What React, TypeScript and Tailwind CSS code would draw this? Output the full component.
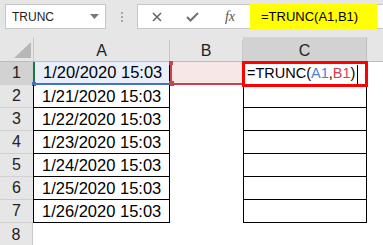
import React from "react";

const rows = [
  "1/20/2020 15:03",
  "1/21/2020 15:03",
  "1/22/2020 15:03",
  "1/23/2020 15:03",
  "1/24/2020 15:03",
  "1/25/2020 15:03",
  "1/26/2020 15:03",
];

const font = { fontFamily: '"Liberation Sans", Arial, sans-serif' };

function TopBar() {
  return (
    <div className="h-[37px] bg-[#e6e6e6] flex items-start pt-[4px]">
      {/* name box */}
      <div className="ml-[5px] w-[101px] h-[25px] bg-white border border-[#c6c6c6] flex items-center pl-[6px] pr-[6px]">
        <span className="text-[12px] text-[#222] flex-1">TRUNC</span>
        <svg width="9" height="5" viewBox="0 0 9 5">
          <path d="M0 0 L9 0 L4.5 5 Z" fill="#777" />
        </svg>
      </div>
      {/* dots */}
      <div className="w-[31px] h-[25px] flex flex-col items-center justify-center gap-[2px]">
        <div className="w-[2px] h-[2px] bg-[#a6a6a6]" />
        <div className="w-[2px] h-[2px] bg-[#a6a6a6]" />
        <div className="w-[2px] h-[2px] bg-[#a6a6a6]" />
      </div>
      {/* formula bar */}
      <div className="flex-1 h-[25px] bg-white border border-[#c6c6c6] border-r-0 flex items-center">
        <div className="w-[37px] flex justify-center">
          <svg width="10" height="10" viewBox="0 0 10 10">
            <path d="M1 1 L9 9 M9 1 L1 9" stroke="#666" strokeWidth="1.6" />
          </svg>
        </div>
        <div className="w-[35px] flex justify-center">
          <svg width="13" height="10" viewBox="0 0 13 10">
            <path d="M1 5 L4.5 8.5 L12 1" stroke="#707070" strokeWidth="2" fill="none" />
          </svg>
        </div>
        <div className="w-[40px] flex justify-center">
          <span
            className="italic text-[14px] text-[#555]"
            style={{ fontFamily: '"Liberation Serif", "Times New Roman", serif' }}
          >
            fx
          </span>
        </div>
        <div className="w-[127px] h-[25px] -my-px bg-[#ffff00] flex items-center pl-[11px] text-[13px] text-black">
          =TRUNC(A1,B1)
        </div>
      </div>
    </div>
  );
}

function HeaderRow() {
  return (
    <div className="h-[25px] bg-[#e6e6e6] flex border-b border-[#bdbdbd]">
      <div className="w-[34px] h-full flex items-end justify-end pr-[2px] pb-[3px] border-r border-[#c8c8c8]">
        <svg width="17" height="16" viewBox="0 0 17 16">
          <path d="M17 0 L17 16 L0 16 Z" fill="#b7b7b7" />
        </svg>
      </div>
      <div className="w-[136px] flex items-center justify-center border-r border-[#c8c8c8] text-[16px] text-[#222] mt-[3px]">
        A
      </div>
      <div className="w-[73px] flex items-center justify-center border-r border-[#c8c8c8] text-[16px] text-[#222] mt-[3px]">
        B
      </div>
      <div className="w-[124px] flex items-center justify-center bg-[#d2d2d2] border-r border-[#c0c0c0] text-[16px] text-[#222] pt-[3px]">
        C
      </div>
      <div className="flex-1" />
    </div>
  );
}

function Row({ n, value }: { n: number; value: string }) {
  const first = n === 1;
  return (
    <div className="h-[23px] flex">
      <div
        className={`w-[33px] flex items-center justify-center text-[16px] border-b border-[#d0d0d0] ${
          first ? "bg-[#d2d2d2] text-[#222]" : "bg-[#e6e6e6] text-[#222]"
        }`}
      >
        {n}
      </div>
      <div
        className={`relative w-[137px] flex items-center pl-[8px] text-[16.5px] text-black ${
          first
            ? "bg-[#e8effa] border-l-2 border-l-[#217346] border-b-2 border-b-[#4472c4] border-r border-r-black"
            : "border-l border-r border-b border-black"
        }`}
      >
        {value}
        {first && <div className="absolute left-[-3px] bottom-[-3px] w-[4px] h-[4px] bg-[#4472c4]" />}
      </div>
      <div
        className={`relative w-[73px] ${
          first ? "bg-[#f8e7e7] border-l-2 border-l-[#c8434b] border-b-2 border-b-[#c8434b]" : ""
        }`}
      >
        {first && (
          <>
            <div className="absolute left-[-3px] top-[-1px] w-[4px] h-[4px] bg-[#c8434b]" />
            <div className="absolute left-[-3px] bottom-[-3px] w-[5px] h-[5px] bg-[#c8434b]" />
          </>
        )}
      </div>
      <div
        className={`relative w-[124px] flex items-center text-[16.5px] ${
          first ? "" : "border-l border-r border-b border-black"
        }`}
      >
        {first && (
          <div className="absolute left-[-1px] top-[-1px] w-[126px] h-[26px] border-[3px] border-[#ff0000] flex items-center pl-[2px] text-[14.5px] z-10">
            <span className="text-black">=TRUNC(</span>
            <span className="text-[#4a7fd4]">A1</span>
            <span className="text-black">,</span>
            <span className="text-[#cf444c]">B1</span>
            <span className="text-black">)</span>
            <span className="ml-[2px] w-px h-[19px] bg-black" />
          </div>
        )}
      </div>
      <div className="flex-1" />
    </div>
  );
}

export default function App() {
  return (
    <div className="w-[383px] h-[245px] overflow-hidden bg-white" style={font}>
      <TopBar />
      <HeaderRow />
      {rows.map((v, i) => (
        <Row key={i} n={i + 1} value={v} />
      ))}
      <div className="h-[23px] flex">
        <div className="w-[33px] bg-[#e6e6e6] flex items-center justify-center text-[16px] text-[#222] border-r border-[#c8c8c8]">
          8
        </div>
      </div>
    </div>
  );
}
